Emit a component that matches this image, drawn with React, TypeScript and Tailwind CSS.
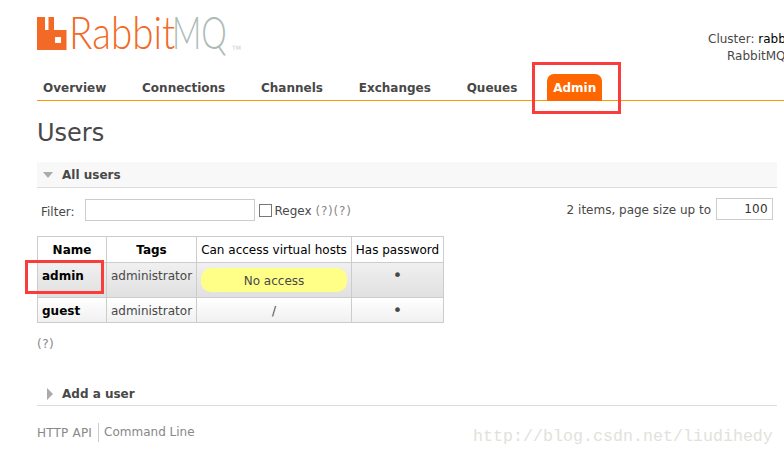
const tabs = ['Overview', 'Connections', 'Channels', 'Exchanges', 'Queues'];

const users = [
  { name: 'admin', row: 'h-[35px] bg-linear-to-b from-[#f0f0f0] to-[#e0e0e0]' },
  { name: 'guest', row: 'h-[25px] bg-linear-to-b from-white to-[#f0f0f0]' },
];

const cell = 'border border-[#ccc] p-0 font-normal';

const Logo = () => (
  <div className="flex items-start pt-[10px] select-none">
    <svg width="30" height="33" viewBox="0 0 30 33" className="mt-[7px] shrink-0">
      <path
        fillRule="evenodd"
        fill="#f26a25"
        d="M0 0h8v13h3.500V0h5.500v13h12.500v20H0zM18 20v6h6v-6z"
      />
    </svg>
    <div className="-mt-px ml-[2px] flex w-[163px] whitespace-nowrap font-['Lato',sans-serif] text-[46px] leading-[46px] font-light">
      <span className="w-[103px] origin-left scale-x-[0.84] text-[#f26a25]">Rabbit</span>
      <span className="origin-left scale-x-[0.7] text-[#aebbb5]">MQ</span>
    </div>
    <span className="mt-[33px] text-[6px] text-[#ccc]">TM</span>
  </div>
);

const App = () => {
  return (
    <div className="relative h-[455px] w-[784px] overflow-hidden bg-white pl-[37px] font-['DejaVu_Sans',sans-serif] text-[12px] text-[#484848]">
      {/* Header */}
      <div className="flex h-[74px]">
        <Logo />
        <div className="ml-auto mt-[31px] w-[76px] overflow-hidden whitespace-nowrap leading-[17px]">
          <div>
            Cluster: <span className="text-black">rabbit@localhost</span>
          </div>
          <div className="pl-[19px]">RabbitMQ 3.6.10</div>
        </div>
      </div>

      {/* Tabs */}
      <div className="flex h-[27px] border-b border-[#f90]">
        {tabs.map((tab) => (
          <div key={tab} className="mr-[23.800px] px-[6px] pt-[5px] font-bold">
            {tab}
          </div>
        ))}
        <div className="h-[27px] rounded-t-[7px] bg-[#f60] px-[6px] pt-[5px] font-bold text-white">Admin</div>
      </div>

      <h1 className="mt-[17px] text-[24px] leading-[30px] font-normal">Users</h1>

      {/* All users */}
      <div className="mt-[14px] w-[740px]">
        <div className="flex h-[26px] items-center border-b border-[#ddd] bg-[#f8f8f8] pl-[6px] font-bold">
          <span className="h-0 w-0 border-x-[5.500px] border-t-[6px] border-x-transparent border-t-[#aaa]" />
          <span className="ml-[8px] pl-px">All users</span>
        </div>
        <div className="mt-[11px] flex items-start">
          <span className="mt-[4px] ml-[4px]">Filter:</span>
          <input className="ml-[10px] h-[22px] w-[170px] border border-[#ccc]" />
          <span className="mt-[5px] ml-[4px] h-[13px] w-[13px] border border-[#777]" />
          <span className="mt-[3px] ml-[3px]">
            Regex <span className="tracking-[0.800px] text-[#888]">(?)(?)</span>
          </span>
          <span className="mt-[2px] ml-auto">2 items, page size up to</span>
          <input
            readOnly
            value="100"
            className="mr-[4px] ml-[5px] -mt-px h-[22px] w-[57px] border border-[#ccc] pr-[4px] text-right tracking-[0.3px] text-[#333]"
          />
        </div>

        <table className="mt-[15px] table-fixed border-collapse text-center">
          <thead>
            <tr className="h-[26px] bg-white text-black">
              <th className={`${cell} w-[69px] !font-bold`}>Name</th>
              <th className={`${cell} w-[90px] !font-bold`}>Tags</th>
              <th className={`${cell} w-[155px]`}>Can access virtual hosts</th>
              <th className={`${cell} w-[92px]`}>Has password</th>
            </tr>
          </thead>
          <tbody>
            {users.map((user) => {
              const offset = user.name === 'admin' ? 'mb-[9px]' : 'mt-px';
              return (
                <tr key={user.name} className={user.row}>
                  <td className={`${cell} pl-[4px] text-left !font-bold text-black`}>
                    <div className={offset}>{user.name}</div>
                  </td>
                  <td className={cell}>
                    <div className={offset}>administrator</div>
                  </td>
                  <td className={cell}>
                    {user.name === 'admin' ? (
                      <div className="mx-[4px] flex h-[24px] items-center justify-center rounded-[10px] bg-[#ff8] pt-px">No access</div>
                    ) : (
                      <div className={offset}>/</div>
                    )}
                  </td>
                  <td className={cell}>
                    <div className={`${offset} text-[16px] leading-[14px]`}>•</div>
                  </td>
                </tr>
              );
            })}
          </tbody>
        </table>

        <div className="mt-[12px] tracking-[0.500px] text-[#888]">(?)</div>

        {/* Add a user */}
        <div className="mt-[29px] flex h-[24px] items-center border-b border-[#ddd] pl-[10px] font-bold">
          <span className="h-0 w-0 border-y-[6px] border-l-[6px] border-y-transparent border-l-[#aaa]" />
          <span className="ml-[9px]">Add a user</span>
        </div>
      </div>

      {/* Footer */}
      <div className="mt-[17px] flex items-center text-[#888]">
        <span className="pr-[6px] tracking-[0.200px]">HTTP API</span>
        <span className="border-l border-[#ccc] pl-[5px] leading-[19px]">Command Line</span>
      </div>

      {/* Watermark */}
      <div className="absolute top-[427px] left-[473px] font-['Liberation_Mono',monospace] text-[16.670px] leading-[20px] whitespace-nowrap text-[#e2e2dc]">
        http://blog.csdn.net/liudihedy
      </div>

      {/* Annotation boxes */}
      <div className="absolute top-[62px] left-[532px] h-[52px] w-[89px] border-[3px] border-[#f93c3c]" />
      <div className="absolute top-[260px] left-[25px] h-[34px] w-[79px] border-[3px] border-[#f93c3c]" />
    </div>
  );
};

export default App;
